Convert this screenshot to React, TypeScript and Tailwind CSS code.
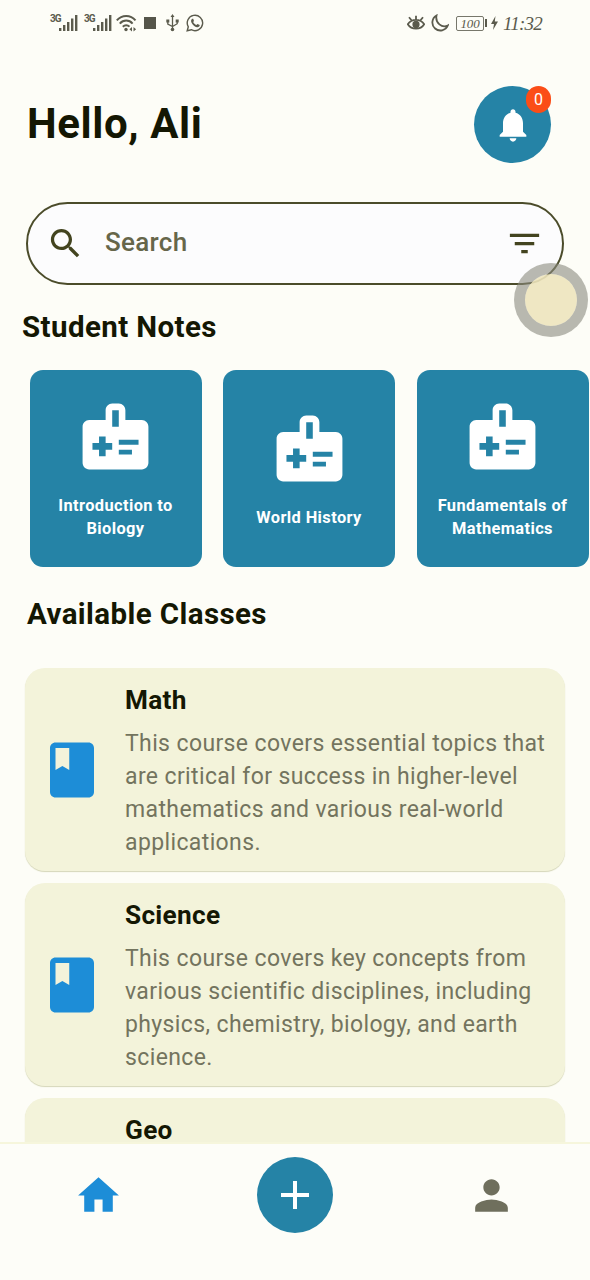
import React from "react";

type IconProps = { d: string; className?: string };

const Icon = ({ d, className }: IconProps) => (
  <svg viewBox="0 0 24 24" fill="currentColor" className={className}>
    <path d={d} />
  </svg>
);

const paths = {
  bell: "M12 22c1.1 0 2-.9 2-2h-4c0 1.1.89 2 2 2zm6-6v-5c0-3.07-1.64-5.64-4.5-6.32V4c0-.83-.67-1.5-1.5-1.5s-1.5.67-1.5 1.5v.68C7.63 5.36 6 7.92 6 11v5l-2 2v1h16v-1l-2-2z",
  search:
    "M15.5 14h-.79l-.28-.27C15.41 12.59 16 11.11 16 9.5 16 5.91 13.09 3 9.5 3S3 5.91 3 9.5 5.91 16 9.5 16c1.61 0 3.09-.59 4.23-1.57l.27.28v.79l5 4.99L20.49 19l-4.99-5zm-6 0C7.01 14 5 11.99 5 9.5S7.01 5 9.5 5 14 7.01 14 9.5 11.99 14 9.5 14z",
  filter: "M10 18h4v-2h-4v2zM3 6v2h18V6H3zm3 7h12v-2H6v2z",
  badge:
    "M20 7h-5V4c0-1.1-.9-2-2-2h-2c-1.1 0-2 .9-2 2v3H4c-1.1 0-2 .9-2 2v11c0 1.1.9 2 2 2h16c1.1 0 2-.9 2-2V9c0-1.1-.9-2-2-2zm-9-3h2v5h-2V4zm0 12H9v2H7v-2H5v-2h2v-2h2v2h2v2zm2-1.5V13h6v1.5h-6zm0 3V16h4v1.5h-4z",
  book: "M18 2H6c-1.1 0-2 .9-2 2v16c0 1.1.9 2 2 2h12c1.1 0 2-.9 2-2V4c0-1.1-.9-2-2-2zM6 4h5v8l-2.5-1.5L6 12V4z",
  home: "M10 20v-6h4v6h5v-8h3L12 3 2 12h3v8z",
  plus: "M19 13h-6v6h-2v-6H5v-2h6V5h2v6h6v2z",
  person:
    "M12 12c2.21 0 4-1.79 4-4s-1.79-4-4-4-4 1.79-4 4 1.79 4 4 4zm0 2c-2.67 0-8 1.34-8 4v2h16v-2c0-2.66-5.33-4-8-4z",
};

const Signal = () => (
  <div className="flex h-[18px] w-[28px] shrink-0">
    <span className="w-[9px] text-[10px] leading-[10px] font-bold tracking-[-1px]">3G</span>
    <svg viewBox="0 0 19 18" className="h-[18px] w-[19px]" fill="currentColor">
      <path d="M0 14h2.4v3H0zM4 11h2.4v6H4zM8 8h2.4v9H8zM12 4.500h2.400v12.500h-2.400zM16 1h2.400v16h-2.400z" />
    </svg>
  </div>
);

const StatusBar = () => (
  <div className="flex h-[46px] items-center pl-[50px] text-[#5b5b4d]">
    <Signal />
    <div className="w-[6px]" />
    <Signal />
    <svg viewBox="0 0 21 18" className="ml-[4px] h-[18px] w-[21px]" fill="none" stroke="currentColor" strokeWidth="2">
      <path d="M.8 6.300C6 .4 14.500.4 19.500 6.300M3.800 9.600c3.600-4 9.200-4 12.800 0M6.800 12.700c2-2.100 4.800-2.100 6.700 0" />
      <circle cx="10" cy="15.500" r="1.700" fill="currentColor" stroke="none" />
      <path d="M16 13l-2.600 2.200 2.600 2.200zM17.500 13l2.600 2.200-2.600 2.200z" fill="currentColor" stroke="none" />
    </svg>
    <div className="ml-[7px] h-[12px] w-[12px] bg-[#55554a]" />
    <svg viewBox="0 0 13 18" className="ml-[10px] h-[18px] w-[13px]" fill="none" stroke="currentColor" strokeWidth="1.300">
      <path d="M6.500 2v13M1.800 7v3.200l4.700 2.300 4.700-2.800V7" />
      <path d="M6.500 0l2 3h-4zM.3 5.500h3v3h-3zM9.700 5.500h3v3h-3z" fill="currentColor" stroke="none" />
      <circle cx="6.500" cy="15.500" r="1.800" fill="currentColor" stroke="none" />
    </svg>
    <svg viewBox="0 0 18 18" className="ml-[7px] h-[18px] w-[18px]" fill="none" stroke="currentColor" strokeWidth="1.400">
      <path d="M1.200 16.800l1.100-4A7.700 7.700 0 1 1 5.300 15.700z" />
      <path
        d="M6.300 4.700c-1.400.8-1.600 2.400-.6 4.200 1.200 2.200 3 3.800 5.200 4.300 1.500.3 2.900-.7 2.800-2.200l-2.200-1.100-1.100 1.200C9 10.500 7.800 9.400 7.200 8l.8-1.100-.8-2.100z"
        fill="currentColor"
        stroke="none"
      />
    </svg>
    <svg viewBox="0 0 18 16" className="ml-[203px] h-[16px] w-[18px]" fill="none" stroke="currentColor" strokeWidth="1.800">
      <path d="M.8 9.200C4.500 3.500 13.500 3.500 17.200 9.200 13.500 15.200 4.500 15.200.8 9.200zM9 4.500V.8M4.500 5.300L2 2.200M13.500 5.300L16 2.200" />
      <circle cx="9" cy="9.400" r="2.700" fill="currentColor" />
    </svg>
    <svg viewBox="0 0 18 18" className="ml-[6px] h-[18px] w-[18px]" fill="none" stroke="currentColor" strokeWidth="1.800">
      <path d="M5.500 1.500A8 8 0 1 0 16.800 11.500C11 14.500 4 9 5.500 1.500z" />
    </svg>
    <div className="ml-[7px] flex h-[15px] w-[28px] items-center justify-center rounded-[2px] border border-[#77776b] font-['Liberation_Serif',serif] text-[13px] leading-none italic tracking-[-0.2px]">
      100
    </div>
    <div className="ml-px h-[8px] w-[2px] bg-[#5b5b4d]" />
    <svg viewBox="0 0 7 14" className="ml-[4px] h-[14px] w-[7px]" fill="currentColor">
      <path d="M4.500 0L0 8h3L2 14l5-8.500H3.800z" />
    </svg>
    <span className="ml-[5px] font-['Liberation_Serif',serif] text-[19px] leading-none italic tracking-[-0.8px]">11:32</span>
  </div>
);

const notes = ["Introduction to\nBiology", "World History", "Fundamentals of\nMathematics"];

const classes = [
  {
    title: "Math",
    lines: "This course covers essential topics that\nare critical for success in higher-level\nmathematics and various real-world\napplications.",
  },
  {
    title: "Science",
    lines: "This course covers key concepts from\nvarious scientific disciplines, including\nphysics, chemistry, biology, and earth\nscience.",
  },
  { title: "Geo", lines: "" },
];

export default function App() {
  return (
    <div className="relative flex h-[1280px] w-[590px] flex-col overflow-hidden bg-[#fdfdf7] font-[Roboto,sans-serif] text-[#141703]">
      <StatusBar />

      <header className="mt-[40px] flex h-[77px] items-center justify-between pr-[39px] pl-[27px]">
        <h1 className="pb-[2px] text-[42px] leading-none font-bold tracking-[0.6px]">Hello, Ali</h1>
        <div className="relative flex h-[77px] w-[77px] items-center justify-center rounded-full bg-[#2583a6] text-white">
          <Icon d={paths.bell} className="h-[40px] w-[40px]" />
          <span className="absolute top-0 right-0 flex h-[27px] w-[25px] items-center justify-center rounded-full bg-[#fb4d17] text-[16px] leading-none">
            0
          </span>
        </div>
      </header>

      <div className="mt-[39px] ml-[26px] flex h-[83px] w-[538px] shrink-0 items-center rounded-full border-2 border-[#4b4c2a] bg-[#fcfcfd] pl-[18px] text-[#43441f]">
        <Icon d={paths.search} className="h-[39px] w-[39px]" />
        <span className="ml-[20px] w-[400px] pb-[3px] text-[26px] leading-none font-medium tracking-[0.3px] text-[#66664a]">
          Search
        </span>
        <Icon d={paths.filter} className="h-[39px] w-[39px]" />
      </div>

      <h2 className="mt-[25px] ml-[22px] h-[34px] text-[29.5px] leading-[34px] font-bold tracking-[0.41px]">Student Notes</h2>

      <div className="mt-[26px] ml-[29.5px] flex h-[197px] shrink-0 gap-[21.500px]">
        {notes.map((note) => (
          <div
            key={note}
            className="flex h-[197px] w-[172px] shrink-0 flex-col items-center justify-center rounded-[13px] bg-[#2583a6] text-white"
          >
            <Icon d={paths.badge} className="h-[79px] w-[79px]" />
            <p className="mt-[18px] text-center text-[16.4px] leading-[23px] font-bold tracking-[0.4px] whitespace-pre-line">
              {note}
            </p>
          </div>
        ))}
      </div>

      <h2 className="mt-[30px] ml-[27px] h-[34px] text-[29.5px] leading-[34px] font-bold tracking-[0.41px]">Available Classes</h2>

      <main className="mt-[37px] flex h-[474px] shrink-0 flex-col gap-[12px] overflow-hidden px-[25px]">
        {classes.map((item) => (
          <article
            key={item.title}
            className="flex h-[203px] w-[540px] shrink-0 items-center rounded-[20px] bg-[#f3f3da] pl-[14px] shadow-[0_1px_1px_#d5d6b8]"
          >
            <Icon d={paths.book} className="h-[66px] w-[66px] text-[#1d8dd7]" />
            <div className="ml-[20px] h-[173px]">
              <h3 className="h-[36px] text-[26.2px] leading-[34px] font-bold tracking-[0.3px]">{item.title}</h3>
              <p className="mt-[8px] text-[23px] leading-[33px] tracking-[0.38px] whitespace-pre text-[#73745e]">{item.lines}</p>
            </div>
          </article>
        ))}
      </main>

      <nav className="flex h-[138px] shrink-0 items-start border-t-2 border-[#f6f6dc] bg-[#fdfdf8] pt-[13px]">
        <div className="flex h-[76px] w-[197px] items-center justify-center text-[#1d8dd7]">
          <Icon d={paths.home} className="h-[49px] w-[49px]" />
        </div>
        <div className="flex h-[76px] w-[196px] items-center justify-center">
          <div className="flex h-[76px] w-[76px] items-center justify-center rounded-full bg-[#2583a6] text-white">
            <Icon d={paths.plus} className="h-[48px] w-[48px]" />
          </div>
        </div>
        <div className="flex h-[76px] w-[197px] items-center justify-center text-[#6f6f5d]">
          <Icon d={paths.person} className="h-[49px] w-[49px]" />
        </div>
      </nav>

      <div className="absolute top-[263px] left-[513.5px] h-[74px] w-[74px] rounded-full border-[11px] border-[#8a8a7e]/60 bg-[#ede4bc]/90 bg-clip-padding" />
    </div>
  );
}
